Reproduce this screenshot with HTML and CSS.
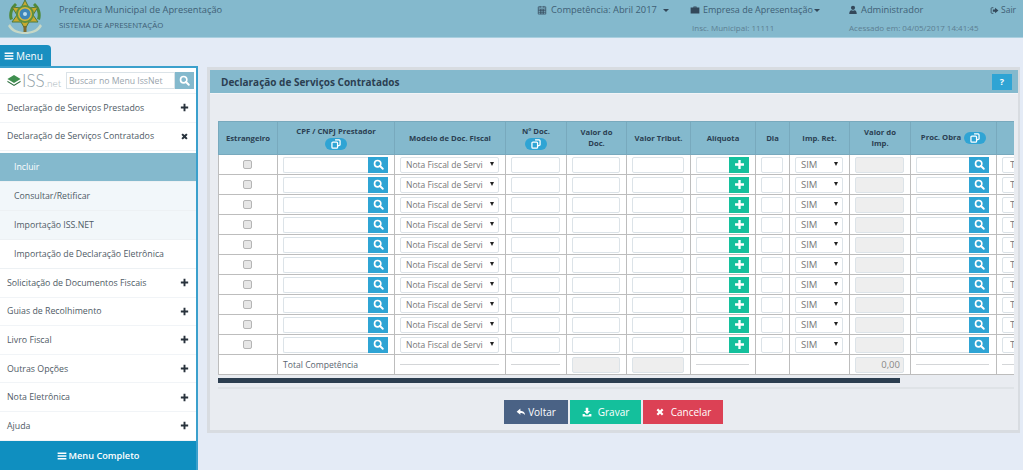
FILE: index.html
```html
<!DOCTYPE html>
<html lang="pt-BR">
<head>
<meta charset="utf-8">
<title>Declaração de Serviços Contratados</title>
<link rel="stylesheet" href="styles.css">
</head>
<body>
<svg class="defs" width="0" height="0" aria-hidden="true">
  <symbol id="i-search" viewBox="0 0 16 16"><circle cx="6.800" cy="6.800" r="4.600" fill="none" stroke="currentColor" stroke-width="2.400"/><path d="M10.200 10.200l4 4" stroke="currentColor" stroke-width="2.800" stroke-linecap="round"/></symbol>
  <symbol id="i-plus" viewBox="0 0 16 16"><path d="M6.300 1.500h3.400v4.800h4.800v3.400H9.700v4.800H6.300V9.700H1.500V6.300h4.800z" fill="currentColor"/></symbol>
  <symbol id="i-x" viewBox="0 0 16 16"><path d="M2.500 5l2.500-2.500L8 5.500l3-3L13.500 5l-3 3 3 3-2.500 2.500-3-3-3 3L2.500 11l3-3z" fill="currentColor"/></symbol>
  <symbol id="i-bars" viewBox="0 0 16 16"><path d="M1 2.500h14v2.400H1zM1 6.800h14v2.400H1zM1 11.100h14v2.400H1z" fill="currentColor"/></symbol>
  <symbol id="i-copy" viewBox="0 0 16 16"><path d="M6.500 1.500H13a1.500 1.500 0 0 1 1.500 1.500v6.500L11.500 11M3 5h6a1.500 1.500 0 0 1 1.500 1.500V13A1.500 1.500 0 0 1 9 14.500H3A1.500 1.500 0 0 1 1.500 13V6.500A1.500 1.500 0 0 1 3 5z" fill="none" stroke="currentColor" stroke-width="2"/></symbol>
  <symbol id="i-cal" viewBox="0 0 16 16"><path d="M2 3h12v11.500H2zM2 6.500h12M5 1.500v3M11 1.500v3M5.500 6.500v8M8 6.500v8M10.500 6.500v8M2 9h12M2 11.700h12" fill="none" stroke="currentColor" stroke-width="1.100"/></symbol>
  <symbol id="i-brief" viewBox="0 0 16 16"><path d="M5.500 4V2.500h5V4H15v9.500H1V4zM6.800 4h2.400V3.500H6.800z" fill="currentColor" fill-rule="evenodd"/></symbol>
  <symbol id="i-user" viewBox="0 0 16 16"><circle cx="8" cy="4.500" r="3.300" fill="currentColor"/><path d="M2 14.500c0-4 1.500-6 3.500-6.200 1.500 1 3.500 1 5 0 2 .2 3.500 2.200 3.500 6.200z" fill="currentColor"/></symbol>
  <symbol id="i-out" viewBox="0 0 16 16"><path d="M6 3H3.500A1.500 1.500 0 0 0 2 4.500v7A1.500 1.500 0 0 0 3.500 13H6" fill="none" stroke="currentColor" stroke-width="1.500"/><path d="M9 3l6 5-6 5v-3H5V6h4z" fill="currentColor"/></symbol>
  <symbol id="i-reply" viewBox="0 0 16 16"><path d="M7 2.500L1 7.500l6 5V9.500c3 0 5.500.5 7.500 3.500 0-4-2.500-6.800-7.500-7z" fill="currentColor"/></symbol>
  <symbol id="i-down" viewBox="0 0 16 16"><path d="M6 1h4v5.500h3L8 11.500 3 6.500h3zM1 11h3l1.500 2h5L12 11h3v4H1z" fill="currentColor"/></symbol>
</svg>

<header class="topbar">
  <svg class="crest" viewBox="0 0 36 34" aria-label="Brasão">
    <path d="M3 24c3 6 9 8 15 8s12-2 15-8l2 2c-3 6-10 8-17 8S4 32 1 26z" fill="#c7d8c6"/>
    <path d="M3 20c-2-6 0-13 5-17l2 2c-4 4-6 9-4 14zM33 20c2-6 0-13-5-17l-2 2c4 4 6 9 4 14z" fill="#4f8a3a"/>
    <path d="M18 0l4 8 9-1-5 8 5 7-9 0-4 7-4-7-9 0 5-7-5-8 9 1z" fill="#c8a92f" stroke="#4f7a3a" stroke-width="1"/>
    <circle cx="18" cy="14" r="9" fill="#5f8f3f"/>
    <circle cx="18" cy="14" r="7" fill="#d9b93a"/>
    <circle cx="18" cy="14" r="5.500" fill="#3f86b8"/>
    <circle cx="18" cy="14" r="2" fill="#bcdcec"/>
    <path d="M16.500 26h3v6h-3z" fill="#7d6a2e"/>
  </svg>
  <div class="org">
    <div class="org-name">Prefeitura Municipal de Apresentação</div>
    <div class="org-sub">SISTEMA DE APRESENTAÇÃO</div>
  </div>
  <div class="top-right">
    <div class="top-col c-comp">
      <div class="top-line"><svg class="ti"><use href="#i-cal"/></svg>Competência: Abril 2017<span class="caret"></span></div>
    </div>
    <div class="top-col c-emp">
      <div class="top-line"><svg class="ti"><use href="#i-brief"/></svg>Empresa de Apresentação<span class="caret tight"></span></div>
      <div class="top-small">Insc. Municipal: 11111</div>
    </div>
    <div class="top-col c-adm">
      <div class="top-line"><svg class="ti"><use href="#i-user"/></svg>Administrador</div>
      <div class="top-small">Acessado em: 04/05/2017 14:41:45</div>
    </div>
    <div class="top-col c-out">
      <div class="top-line sair"><svg class="ti small"><use href="#i-out"/></svg>Sair</div>
    </div>
  </div>
</header>

<div class="shell">
  <aside class="side">
    <div class="menu-tab"><svg class="bars"><use href="#i-bars"/></svg>Menu</div>
    <nav class="menu">
      <div class="search-row">
        <div class="iss-logo">
          <svg class="iss-mark" viewBox="0 0 16 12.500"><path d="M8 0l7.500 4.500L8 9 .5 4.500z" fill="#3f8f4f"/><path d="M.5 6.500L8 11l7.500-4.500v1.500L8 12.500.5 8z" fill="#2f6f3f"/></svg>
          <span class="iss-big">ISS</span><span class="iss-net">.net</span>
        </div>
        <div class="search-box">
          <input class="search-input" type="text" placeholder="Buscar no Menu IssNet">
          <span class="search-btn"><svg class="sic"><use href="#i-search"/></svg></span>
        </div>
      </div>
      <div class="mi"><span>Declaração de Serviços Prestados</span><svg class="mi-ic"><use href="#i-plus"/></svg></div>
      <div class="mi open"><span>Declaração de Serviços Contratados</span><svg class="mi-ic"><use href="#i-x"/></svg></div>
      <div class="sub active">Incluir</div>
      <div class="sub tint">Consultar/Retificar</div>
      <div class="sub tint">Importação ISS.NET</div>
      <div class="sub">Importação de Declaração Eletrônica</div>
      <div class="mi"><span>Solicitação de Documentos Fiscais</span><svg class="mi-ic"><use href="#i-plus"/></svg></div>
      <div class="mi"><span>Guias de Recolhimento</span><svg class="mi-ic"><use href="#i-plus"/></svg></div>
      <div class="mi"><span>Livro Fiscal</span><svg class="mi-ic"><use href="#i-plus"/></svg></div>
      <div class="mi"><span>Outras Opções</span><svg class="mi-ic"><use href="#i-plus"/></svg></div>
      <div class="mi"><span>Nota Eletrônica</span><svg class="mi-ic"><use href="#i-plus"/></svg></div>
      <div class="mi"><span>Ajuda</span><svg class="mi-ic"><use href="#i-plus"/></svg></div>
      <div class="menu-full"><svg class="bars"><use href="#i-bars"/></svg>Menu Completo</div>
    </nav>
  </aside>

  <main class="panel">
    <div class="panel-title">
      <h1>Declaração de Serviços Contratados</h1>
      <span class="help">?</span>
    </div>
    <div class="panel-body">
      <div class="table-clip">
        <table class="grid">
          <colgroup>
            <col class="w1"><col class="w2"><col class="w3"><col class="w4"><col class="w5"><col class="w6"><col class="w7"><col class="w8"><col class="w9"><col class="w10"><col class="w11"><col class="w12">
          </colgroup>
          <thead>
            <tr>
              <th>Estrangeiro</th>
              <th>CPF / CNPJ Prestador<span class="pill"><svg><use href="#i-copy"/></svg></span></th>
              <th>Modelo de Doc. Fiscal</th>
              <th>Nº Doc.<span class="pill"><svg><use href="#i-copy"/></svg></span></th>
              <th>Valor do Doc.</th>
              <th>Valor Tribut.</th>
              <th>Alíquota</th>
              <th>Dia</th>
              <th>Imp. Ret.</th>
              <th>Valor do Imp.</th>
              <th>Proc. Obra<span class="pill inline"><svg><use href="#i-copy"/></svg></span></th>
              <th></th>
            </tr>
          </thead>
          <tbody>
            <tr><td class="ctr"><input class="chk" type="checkbox"></td><td><div class="ig"><input class="f"><span class="ib blue"><svg><use href="#i-search"/></svg></span></div></td><td><div class="sel"><select><option>Nota Fiscal de Serviço</option></select></div></td><td><input class="f"></td><td><input class="f"></td><td><input class="f"></td><td><div class="ig"><input class="f"><span class="ib green"><svg><use href="#i-plus"/></svg></span></div></td><td><input class="f"></td><td><div class="sel"><select class="sim"><option>SIM</option></select></div></td><td><input class="f off" disabled></td><td><div class="ig"><input class="f"><span class="ib blue"><svg><use href="#i-search"/></svg></span></div></td><td><input class="f" value="T"></td></tr>
            <tr><td class="ctr"><input class="chk" type="checkbox"></td><td><div class="ig"><input class="f"><span class="ib blue"><svg><use href="#i-search"/></svg></span></div></td><td><div class="sel"><select><option>Nota Fiscal de Serviço</option></select></div></td><td><input class="f"></td><td><input class="f"></td><td><input class="f"></td><td><div class="ig"><input class="f"><span class="ib green"><svg><use href="#i-plus"/></svg></span></div></td><td><input class="f"></td><td><div class="sel"><select class="sim"><option>SIM</option></select></div></td><td><input class="f off" disabled></td><td><div class="ig"><input class="f"><span class="ib blue"><svg><use href="#i-search"/></svg></span></div></td><td><input class="f" value="T"></td></tr>
            <tr><td class="ctr"><input class="chk" type="checkbox"></td><td><div class="ig"><input class="f"><span class="ib blue"><svg><use href="#i-search"/></svg></span></div></td><td><div class="sel"><select><option>Nota Fiscal de Serviço</option></select></div></td><td><input class="f"></td><td><input class="f"></td><td><input class="f"></td><td><div class="ig"><input class="f"><span class="ib green"><svg><use href="#i-plus"/></svg></span></div></td><td><input class="f"></td><td><div class="sel"><select class="sim"><option>SIM</option></select></div></td><td><input class="f off" disabled></td><td><div class="ig"><input class="f"><span class="ib blue"><svg><use href="#i-search"/></svg></span></div></td><td><input class="f" value="T"></td></tr>
            <tr><td class="ctr"><input class="chk" type="checkbox"></td><td><div class="ig"><input class="f"><span class="ib blue"><svg><use href="#i-search"/></svg></span></div></td><td><div class="sel"><select><option>Nota Fiscal de Serviço</option></select></div></td><td><input class="f"></td><td><input class="f"></td><td><input class="f"></td><td><div class="ig"><input class="f"><span class="ib green"><svg><use href="#i-plus"/></svg></span></div></td><td><input class="f"></td><td><div class="sel"><select class="sim"><option>SIM</option></select></div></td><td><input class="f off" disabled></td><td><div class="ig"><input class="f"><span class="ib blue"><svg><use href="#i-search"/></svg></span></div></td><td><input class="f" value="T"></td></tr>
            <tr><td class="ctr"><input class="chk" type="checkbox"></td><td><div class="ig"><input class="f"><span class="ib blue"><svg><use href="#i-search"/></svg></span></div></td><td><div class="sel"><select><option>Nota Fiscal de Serviço</option></select></div></td><td><input class="f"></td><td><input class="f"></td><td><input class="f"></td><td><div class="ig"><input class="f"><span class="ib green"><svg><use href="#i-plus"/></svg></span></div></td><td><input class="f"></td><td><div class="sel"><select class="sim"><option>SIM</option></select></div></td><td><input class="f off" disabled></td><td><div class="ig"><input class="f"><span class="ib blue"><svg><use href="#i-search"/></svg></span></div></td><td><input class="f" value="T"></td></tr>
            <tr><td class="ctr"><input class="chk" type="checkbox"></td><td><div class="ig"><input class="f"><span class="ib blue"><svg><use href="#i-search"/></svg></span></div></td><td><div class="sel"><select><option>Nota Fiscal de Serviço</option></select></div></td><td><input class="f"></td><td><input class="f"></td><td><input class="f"></td><td><div class="ig"><input class="f"><span class="ib green"><svg><use href="#i-plus"/></svg></span></div></td><td><input class="f"></td><td><div class="sel"><select class="sim"><option>SIM</option></select></div></td><td><input class="f off" disabled></td><td><div class="ig"><input class="f"><span class="ib blue"><svg><use href="#i-search"/></svg></span></div></td><td><input class="f" value="T"></td></tr>
            <tr><td class="ctr"><input class="chk" type="checkbox"></td><td><div class="ig"><input class="f"><span class="ib blue"><svg><use href="#i-search"/></svg></span></div></td><td><div class="sel"><select><option>Nota Fiscal de Serviço</option></select></div></td><td><input class="f"></td><td><input class="f"></td><td><input class="f"></td><td><div class="ig"><input class="f"><span class="ib green"><svg><use href="#i-plus"/></svg></span></div></td><td><input class="f"></td><td><div class="sel"><select class="sim"><option>SIM</option></select></div></td><td><input class="f off" disabled></td><td><div class="ig"><input class="f"><span class="ib blue"><svg><use href="#i-search"/></svg></span></div></td><td><input class="f" value="T"></td></tr>
            <tr><td class="ctr"><input class="chk" type="checkbox"></td><td><div class="ig"><input class="f"><span class="ib blue"><svg><use href="#i-search"/></svg></span></div></td><td><div class="sel"><select><option>Nota Fiscal de Serviço</option></select></div></td><td><input class="f"></td><td><input class="f"></td><td><input class="f"></td><td><div class="ig"><input class="f"><span class="ib green"><svg><use href="#i-plus"/></svg></span></div></td><td><input class="f"></td><td><div class="sel"><select class="sim"><option>SIM</option></select></div></td><td><input class="f off" disabled></td><td><div class="ig"><input class="f"><span class="ib blue"><svg><use href="#i-search"/></svg></span></div></td><td><input class="f" value="T"></td></tr>
            <tr><td class="ctr"><input class="chk" type="checkbox"></td><td><div class="ig"><input class="f"><span class="ib blue"><svg><use href="#i-search"/></svg></span></div></td><td><div class="sel"><select><option>Nota Fiscal de Serviço</option></select></div></td><td><input class="f"></td><td><input class="f"></td><td><input class="f"></td><td><div class="ig"><input class="f"><span class="ib green"><svg><use href="#i-plus"/></svg></span></div></td><td><input class="f"></td><td><div class="sel"><select class="sim"><option>SIM</option></select></div></td><td><input class="f off" disabled></td><td><div class="ig"><input class="f"><span class="ib blue"><svg><use href="#i-search"/></svg></span></div></td><td><input class="f" value="T"></td></tr>
            <tr><td class="ctr"><input class="chk" type="checkbox"></td><td><div class="ig"><input class="f"><span class="ib blue"><svg><use href="#i-search"/></svg></span></div></td><td><div class="sel"><select><option>Nota Fiscal de Serviço</option></select></div></td><td><input class="f"></td><td><input class="f"></td><td><input class="f"></td><td><div class="ig"><input class="f"><span class="ib green"><svg><use href="#i-plus"/></svg></span></div></td><td><input class="f"></td><td><div class="sel"><select class="sim"><option>SIM</option></select></div></td><td><input class="f off" disabled></td><td><div class="ig"><input class="f"><span class="ib blue"><svg><use href="#i-search"/></svg></span></div></td><td><input class="f" value="T"></td></tr>
            <tr class="total">
              <td></td>
              <td class="total-label">Total Competência</td>
              <td><div class="dash"></div></td>
              <td><div class="dash"></div></td>
              <td><input class="f off" disabled></td>
              <td><input class="f off" disabled></td>
              <td><div class="dash"></div></td>
              <td></td>
              <td></td>
              <td><input class="f off num" disabled value="0,00"></td>
              <td><div class="dash"></div></td>
              <td><div class="dash"></div></td>
            </tr>
          </tbody>
        </table>
      </div>
      <div class="scroll-track"><div class="scroll-thumb"></div></div>
      <div class="actions">
        <button class="btn slate"><svg><use href="#i-reply"/></svg>Voltar</button>
        <button class="btn teal wide"><svg><use href="#i-down"/></svg>Gravar</button>
        <button class="btn red wide"><svg><use href="#i-x"/></svg>Cancelar</button>
      </div>
    </div>
  </main>
</div>
</body>
</html>
```

FILE: styles.css
```css
* { box-sizing: border-box; }
html, body { margin: 0; height: 470px; overflow: hidden; }
body { background: #e4ebf6; font-family: "Open Sans", "Liberation Sans", sans-serif; color: #4a5560; font-size: 10px; }
.defs { position: absolute; }

.topbar { height: 38px; background: #84b9cd; border-bottom: 1px solid #a9cfdf; display: flex; align-items: flex-start; }
.crest { width: 36px; height: 34px; margin: 0 0 0 7px; flex: none; }
.org { margin-left: 16px; padding-top: 3px; }
.org-name { font-size: 9.300px; line-height: 14px; color: #3f5f75; }
.org-sub { font-size: 7.850px; line-height: 12px; margin-top: 2px; color: #3f5f75; }
.top-right { margin-left: auto; display: flex; }
.top-col { padding-top: 3px; }
.c-comp { width: 153px; }
.c-emp { width: 158px; }
.c-adm { width: 142px; }
.c-out { width: 33px; }
.top-line { height: 14px; line-height: 14px; font-size: 9.300px; color: #3f5f75; display: flex; align-items: center; white-space: nowrap; }
.c-emp .top-line { font-size: 9px; }
.sair { font-size: 8.500px; }
.ti { width: 10px; height: 10px; margin-right: 4px; color: #33485a; flex: none; }
.c-emp .ti, .c-adm .ti { margin-right: 3px; margin-left: 0; }
.ti.small { width: 9px; height: 9px; margin-right: 2px; }
.caret { width: 0; height: 0; border: 3px solid transparent; border-top-color: #33485a; border-bottom: 0; margin-left: 6px; }
.caret.tight { margin-left: 1px; }
.top-small { font-size: 8px; line-height: 11px; margin-top: 5px; color: #5d7f92; white-space: nowrap; padding-left: 2px; }
.c-adm .top-small { padding-left: 1px; }

.shell { display: flex; height: 432px; }
.side { width: 198px; flex: none; padding-top: 7px; display: flex; flex-direction: column; }
.menu-tab { width: 51px; height: 21px; background: #1a8fc0; border-radius: 0 4px 0 0; color: #fff; font-size: 10px; display: flex; align-items: center; padding-left: 4px; }
.bars { width: 10px; height: 10px; margin-right: 2px; color: currentColor; }
.menu { flex: 1; background: #fff; border-top: 2px solid #3ba0cc; border-right: 2px solid #3ba0cc; display: flex; flex-direction: column; }
.search-row { height: 26px; display: flex; align-items: center; justify-content: space-between; padding: 0 2px 0 7px; background: #fff; border-bottom: 1px solid #eef2f5; }
.iss-logo { display: flex; align-items: baseline; }
.iss-mark { width: 14px; height: 11px; margin-right: 1px; align-self: center; }
.iss-big { font-family: Lato, "Liberation Sans", sans-serif; font-size: 17px; color: #8f9ea6; font-weight: 300; }
.iss-net { font-family: Lato, "Liberation Sans", sans-serif; font-size: 10px; font-weight: 300; color: #a9b5bb; }
.search-box { display: flex; width: 128px; height: 17px; }
.search-input { width: 109px; height: 17px; border: 1px solid #dbe3e8; padding: 0 2px; font: 8.700px "Open Sans", sans-serif; outline: 0; }
.search-input::placeholder { color: #9aa5ad; opacity: 1; }
.search-btn { width: 19px; height: 17px; background: #84b9cd; color: #fff; display: flex; align-items: center; justify-content: center; }
.sic { width: 11px; height: 11px; }
.mi { height: 28.600px; display: flex; align-items: center; justify-content: space-between; padding: 0 7px; border-bottom: 1px solid #f1f4f7; font-size: 8.800px; color: #4f5b66; white-space: nowrap; flex: none; }
.mi.open { height: 28.400px; }
.mi-ic { width: 9px; height: 9px; color: #28323c; flex: none; }
.sub { height: 29px; padding-left: 14px; display: flex; align-items: center; font-size: 8.750px; color: #4f5b66; border-bottom: 1px solid #edf1f4; flex: none; white-space: nowrap; }
.sub.active { background: #84b9cd; color: #fff; margin-top: 2px; }
.sub.tint { background: #f2f7fa; }
.menu-full { margin-top: auto; height: 29px; background: #0f8fc0; color: #fff; display: flex; align-items: center; justify-content: center; font-size: 9.200px; font-weight: 600; }
.menu-full .bars { margin-right: 2px; }

.panel { width: 813px; height: 366px; margin: 29px 0 0 9px; background: #e9ecf1; border: 3px solid #d8dce1; border-right-width: 2px; }
.panel-title { height: 23px; background: #84b9cd; display: flex; align-items: center; justify-content: space-between; padding: 0 6px 0 11px; }
.panel-title h1 { margin: 0; font-size: 10px; font-weight: 700; color: #2b3f52; }
.help { width: 20px; height: 16px; background: #2fa4d4; color: #fff; font-size: 9px; font-weight: 700; display: flex; align-items: center; justify-content: center; }
.panel-body { padding: 27px 4px 0 8px; border-top: 1px solid #f2f4f7; }
.table-clip { width: 796px; overflow: hidden; }
.grid { border-collapse: collapse; table-layout: fixed; width: 838px; background: #fff; }
.w1 { width: 59px; } .w2 { width: 117px; } .w3 { width: 111px; } .w4 { width: 61px; } .w5 { width: 60px; } .w6 { width: 64px; }
.w7 { width: 65px; } .w8 { width: 34px; } .w9 { width: 60px; } .w10 { width: 61px; } .w11 { width: 86px; } .w12 { width: 60px; }
.grid th { height: 33px; background: #84b9cd; border: 1px solid #78a9bd; font-size: 7.700px; line-height: 11px; font-weight: 700; color: #2b3f52; padding: 0 6px; text-align: center; vertical-align: middle; }
.grid th:nth-child(2), .grid th:nth-child(11) { padding: 0 2px; }
.grid td { height: 20px; border: 1px solid #bdbdbd; padding: 0 6px 0 5px; vertical-align: middle; }
.grid td:nth-child(11) { padding-right: 7px; }
.grid tr.total td { height: 20px; }
.ctr { text-align: center; }
.chk { appearance: none; width: 9px; height: 9px; margin: 2px 0 0; border: 1px solid #b5b5b5; border-radius: 2px; background: #e6e6e6; display: inline-block; }
.f { display: block; width: 100%; height: 16px; border: 1px solid #dce3e8; border-radius: 2px; background: #fff; padding: 0 3px; font: 9.500px "Open Sans", sans-serif; color: #777; outline: 0; }
td:last-child .f { padding-left: 7px; }
.f.off { background: #eeeeee; }
.f.num { text-align: right; color: #888; }
.ig { display: flex; height: 16px; }
.ig .f { flex: 1; min-width: 0; border-right: 0; border-radius: 2px 0 0 2px; }
.ib { width: 20px; height: 16px; flex: none; color: #fff; display: flex; align-items: center; justify-content: center; }
.ib svg { width: 11px; height: 11px; }
.blue { background: #2fa4d4; }
.green { background: #14c09c; }
.sel { position: relative; height: 16px; }
.sel select { appearance: none; display: block; width: 100%; height: 16px; padding: 0 15px 0 5px; border: 1px solid #dce3e8; border-radius: 2px; background: #fff; font: 8.500px "Open Sans", sans-serif; color: #777; outline: 0; }
.sel select.sim { font-size: 9.500px; }
.sel::after { content: ""; position: absolute; right: 5px; top: 5px; border: 2.500px solid transparent; border-top: 4px solid #222; border-bottom: 0; }
.pill { display: block; width: 22px; height: 12px; margin: 1px auto 0; border-radius: 6px; background: #2fa4d4; color: #fff; text-align: center; line-height: 10px; }
.pill svg { width: 10px; height: 10px; vertical-align: middle; }
.pill.inline { display: inline-block; margin: 0 0 0 3px; vertical-align: middle; }
.total-label { font-size: 8.600px; color: #5a6670; white-space: nowrap; }
.dash { height: 1px; background: #d4d6d8; }
.scroll-track { margin-top: 3px; height: 11px; border-bottom: 2px solid #dfe3e7; width: 796px; }
.scroll-thumb { width: 682px; height: 5px; background: #2c3e50; }
.actions { display: flex; justify-content: center; gap: 2px; margin-top: 11px; padding-right: 5px; }
.btn { height: 24px; border: 0; color: #fff; padding: 0; font: 10px "Open Sans", sans-serif; display: flex; align-items: center; justify-content: center; }
.btn svg { width: 10px; height: 10px; margin-right: 2px; }
.btn.wide svg { margin-right: 6px; }
.slate { width: 64px; background: #4a6285; }
.teal { width: 71px; background: #14c09c; }
.red { width: 80px; background: #dc4155; }
```
